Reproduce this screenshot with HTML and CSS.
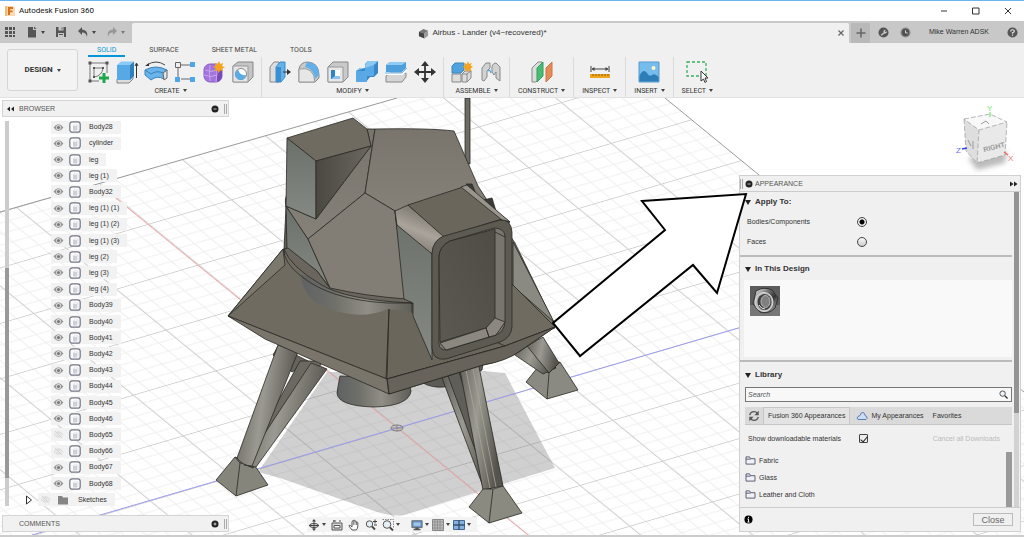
FILE: index.html
```html
<!DOCTYPE html>
<html lang="en">
<head>
<meta charset="utf-8">
<title>Autodesk Fusion 360</title>
<link rel="stylesheet" href="styles.css">
</head>
<body>
<svg class="defs" aria-hidden="true">
  <symbol id="eye" viewBox="0 0 12 10"><path d="M.5 5Q6-2.500 11.500 5Q6 12.500 .5 5Z" fill="#969696"/><circle cx="6" cy="5" r="2.800" fill="#dcdcdc"/><circle cx="6" cy="5" r="1.700" fill="#777"/></symbol>
  <symbol id="eye-off" viewBox="0 0 12 10"><path d="M1 5Q6-1 11 5Q6 11 1 5ZM2 1l8 8" fill="none" stroke="#d2d2d2"/><circle cx="6" cy="5" r="1.800" fill="none" stroke="#d2d2d2"/></symbol>
  <symbol id="body" viewBox="0 0 12 12"><rect x=".8" y=".8" width="10.400" height="10.400" rx="2.500" fill="#fafafa" stroke="#747785" stroke-width="1.200"/><path d="M4 5h4v4.500H4z" fill="#cfcfda"/><path d="M4 5l1-1h4v4.500l-1 1" fill="none" stroke="#e2e2ea"/></symbol>
  <symbol id="folder" viewBox="0 0 12 10"><path d="M1 9V1h4l1 2h5v6z" fill="#eef1f8" stroke="#4d5468"/><path d="M1 3.500h5" stroke="#4d5468" fill="none"/></symbol>
</svg>

<header class="titlebar">
  <svg class="logo" viewBox="0 0 10 10"><path d="M0 0h8l2 2v8H0z" fill="#fbd9b5"/><path d="M0 0h2v10H0z" fill="#f6b97d"/><path d="M3 9V1h5v2H5v1.500h2.500v1.800H5V9z" fill="#d96f12"/></svg>
  <h1>Autodesk Fusion 360</h1>
  <div class="window-buttons">
    <button aria-label="Minimize"><svg viewBox="0 0 10 10"><path d="M2 5h6" stroke="#333"/></svg></button>
    <button aria-label="Maximize"><svg viewBox="0 0 10 10"><path d="M1.500 2h6.500v6H1.500z" fill="none" stroke="#333"/></svg></button>
    <button aria-label="Close window"><svg viewBox="0 0 10 10"><path d="M2 2l6 6M8 2l-6 6" stroke="#333"/></svg></button>
  </div>
</header>

<div class="tabstrip">
  <div class="quick">
    <button aria-label="Data panel"><svg viewBox="0 0 12 12"><path d="M1 1h3v3H1zM5 1h3v3H5zM9 1h2v3H9zM1 5h3v3H1zM5 5h3v3H5zM9 5h2v3H9zM1 9h3v2H1zM5 9h3v2H5zM9 9h2v2H9z" fill="#555"/></svg></button>
    <button class="menu" aria-label="File"><svg viewBox="0 0 12 12"><path d="M2 1h5v3h3v7.500H2z" fill="#555"/><path d="M8 .5L10.500 3H8z" fill="#555"/></svg><i class="caret"></i></button>
    <button aria-label="Save"><svg viewBox="0 0 12 12"><path d="M1 1h10v10H1z" fill="#555"/><path d="M3.500 1h5v3.500h-5zM3 7h6v4H3z" fill="#c8c8c8"/><path d="M6.500 1.500h1v2h-1zM4 8h4v1H4z" fill="#555"/></svg></button>
    <button class="menu" aria-label="Undo"><svg viewBox="0 0 12 12"><path d="M5 1L1 5l4 4V6.500q4-.5 5 4.500Q11.500 4 5 3.500z" fill="#555"/></svg><i class="caret"></i></button>
    <button class="menu faded" aria-label="Redo"><svg viewBox="0 0 12 12"><path d="M7 1l4 4-4 4V6.500q-4-.5-5 4.500Q.5 4 7 3.500z" fill="#777"/></svg><i class="caret"></i></button>
  </div>
  <div class="doc-tab">
    <div class="doc-title">
      <svg class="doc-icon" viewBox="0 0 12 12"><path d="M1 4l5-3 5 2-4 3z" fill="#777"/><path d="M1 4l6 2v5.500L1 9z" fill="#444"/><path d="M7 6l4-3v5.500l-4 3z" fill="#999"/></svg>
      <span>Airbus - Lander (v4~recovered)*</span>
    </div>
    <button class="doc-close" aria-label="Close tab"><svg viewBox="0 0 8 8"><path d="M1.500 1.500l5 5M6.500 1.500l-5 5" stroke="#666" stroke-width="1.200"/></svg></button>
  </div>
  <button class="new-tab" aria-label="New tab"><svg viewBox="0 0 10 10"><path d="M5 .5v9M.5 5h9" stroke="#666" stroke-width="1.500"/></svg></button>
  <div class="account">
    <button aria-label="Extensions"><svg viewBox="0 0 12 12"><circle cx="6" cy="6" r="5.500" fill="#555"/><path d="M3 8.500L6 6q-.5-3 2.500-3L7.500 4.500l1 1L10 4.500Q9.500 8 7 7L4 9.500z" fill="#ccc"/></svg></button>
    <button aria-label="Job status"><svg viewBox="0 0 12 12"><circle cx="6" cy="6" r="5.500" fill="#8a8a8a"/><circle cx="6" cy="6" r="4" fill="#505050"/><path d="M6 3.500V6.500h2.500" stroke="#ddd" fill="none"/></svg></button>
    <button class="user">Mike Warren ADSK</button>
    <button aria-label="Help"><svg viewBox="0 0 12 12"><circle cx="6" cy="6" r="5.500" fill="#555"/><path d="M4 4.800Q4 3 6 3t2 1.600Q8 5.500 6 6.300V7.300M6 8.200v1.300" fill="none" stroke="#e5e5e5" stroke-width="1.300"/></svg></button>
  </div>
</div>

<div class="ribbon">
  <button class="design">DESIGN <i class="caret"></i></button>
  <div class="ribbon-main">
    <nav class="ribbon-tabs">
      <a href="#solid" class="active">SOLID</a><a href="#surface">SURFACE</a><a href="#sheet">SHEET METAL</a><a href="#tools">TOOLS</a>
    </nav>
    <div class="groups">
      <section class="group">
        <div class="icons">
          <button aria-label="Create sketch"><svg viewBox="0 0 24 24"><path d="M4 3h17M4 3v18M4 21h9M21 3v10" stroke="#777" fill="none"/><path d="M8 8v9q8-1 9-9z" fill="none" stroke="#777"/><path d="M2.500 1.500h3v3h-3zM19.500 1.500h3v3h-3zM2.500 19.500h3v3h-3zM7 7h2v2H7zM16 7h2v2h-2zM7 16h2v2H7z" fill="#555"/><path d="M18 13v10M13 18h10" stroke="#1fa84b" stroke-width="3"/></svg></button>
          <button aria-label="Extrude"><svg viewBox="0 0 24 24"><path d="M2 19L6 15h12v4l-4 4H2z" fill="#ddd" stroke="#888"/><path d="M2 5l4-3.500h13L15 5z" fill="#8ccaf5"/><path d="M2 5h13v15H2z" fill="#57a9e6"/><path d="M15 5l4-3.500v14.500l-4 4z" fill="#2e7fbe"/><path d="M21.500 18V4M20 6l1.500-3L23 6" stroke="#333" fill="none"/></svg></button>
          <button aria-label="Revolve"><svg viewBox="0 0 24 24"><path d="M3 5Q12-1 21 5" stroke="#444" fill="none"/><path d="M1 6l4-3v3z" fill="#333"/><path d="M1 10q11-6 22 0l-3 9q-7-4-13 1L1 15z" fill="#68b4eb" stroke="#3882b9"/><path d="M1 10l6 4q6-4 12-1l4-3" stroke="#3882b9" fill="none"/><path d="M19 13l4-3v8l-3 2z" fill="#e5e5e5" stroke="#666"/></svg></button>
          <button aria-label="Pattern"><svg viewBox="0 0 24 24"><path d="M5 8v10M8 5h9M8 19h9" stroke="#666"/><path d="M2.500 2.500h5v5h-5z" fill="#eee" stroke="#666"/><path d="M17 2h5v5h-5zM2 17h5v5H2zM17 17h5v5h-5z" fill="#4da6e8"/></svg></button>
          <button aria-label="Create form"><svg viewBox="0 0 24 24"><rect x="2" y="4" width="18" height="18" rx="6" fill="#a374db" stroke="#8a5cc6"/><path d="M15 9q5-2 5 2v5q0 4-5 6z" fill="#7949b8"/><path d="M3 10q6 3 12 0M2 15q7 3 13 0M8 5q-1 8 0 16M14 5q2 8 0 17" stroke="#c9a5ef" fill="none"/><path d="M17 1l1.200 3 3-1-1.200 3 3 1.200-3 1.300 1 3-3-1.200-1.300 3-1.200-3-3 1 1.200-3-3-1.200 3-1.200-1-3 3 1z" fill="#f5a21c"/></svg></button>
          <button aria-label="Hole"><svg viewBox="0 0 24 24"><path d="M2 6l5-4h15v15l-5 5H2z" fill="#c5c5c5" stroke="#888"/><path d="M2 6h15v16H2z" fill="#e5e5e5" stroke="#999"/><circle cx="10" cy="14" r="5.500" fill="#fff" stroke="#888"/><path d="M7 9.500A5.500 5.500 0 1 0 15 15Q9 16 7 9.500z" fill="#5aaae5"/></svg></button>
        </div><button class="group-label">CREATE <i class="caret"></i></button>
      </section>
      <section class="group">
        <div class="icons">
          <button aria-label="Press pull"><svg viewBox="0 0 24 24"><path d="M2 7l4-5h5v20H2z" fill="#ddd" stroke="#888"/><path d="M8 7l4-5h5v15l-4 5H8z" fill="#66b1ea" stroke="#3d88c2"/><path d="M8 7h5v15H8z" fill="#388fd2"/><path d="M15 12h7" stroke="#333"/><path d="M19 9l4 3-4 3z" fill="#333"/></svg></button>
          <button aria-label="Fillet"><svg viewBox="0 0 24 24"><path d="M2 22V9Q3 2 11 2q11 1 11 13v3l-4 4z" fill="#c9c9c9" stroke="#888"/><path d="M2 22V9q15-3 16 13z" fill="#e6e6e6" stroke="#999"/><path d="M10 2q12 1 12 13l-4 4Q17 9 8 7z" fill="#62afea"/></svg></button>
          <button aria-label="Shell"><svg viewBox="0 0 24 24"><path d="M2 7l5-5h15v15l-5 5H2z" fill="#c9c9c9" stroke="#888"/><path d="M2 7h15v15H2z" fill="#e7e7e7" stroke="#999"/><path d="M5 10h9v9H5z" fill="#8bc5ef"/><path d="M9 10h5v6H9z" fill="#fff"/><path d="M5 10v9l4-3v-6z" fill="#2f84c5"/></svg></button>
          <button aria-label="Combine"><svg viewBox="0 0 24 24"><path d="M1 11l4-3h5V4l3-3h10v12l-4 4h-4l-4 5H1z" fill="#3788c8"/><path d="M1 11h9V5h9v11h-7v6H1z" fill="#58a9e5"/><path d="M1 11l4-3h6L10 5l3-4h10l-4 4" fill="#8bc8f2"/></svg></button>
          <button aria-label="Split body"><svg viewBox="0 0 24 24"><path d="M2 5l4-3h16v6l-4 4H2z" fill="#4e9fdb"/><path d="M2 5l4-3h16l-4 3z" fill="#90cbf3"/><path d="M2 16l4-3h16v4l-4 5H2z" fill="#d5d5d5" stroke="#888"/><path d="M1 14h17l5-4" stroke="#fff" stroke-width="2" fill="none"/><path d="M1 13h17l5-5" stroke="#69b5ee" fill="none"/></svg></button>
          <button aria-label="Move"><svg viewBox="0 0 24 24"><path d="M12 4v16M4 12h16" stroke="#333" stroke-width="1.800"/><path d="M12 1l4 5H8zM12 23l-4-5h8zM1 12l5-4v8zM23 12l-5 4V8z" fill="#333"/></svg></button>
        </div><button class="group-label">MODIFY <i class="caret"></i></button>
      </section>
      <section class="group">
        <div class="icons">
          <button aria-label="New component"><svg viewBox="0 0 24 24"><path d="M2 14h9v8H2zM12 14l3-3h6v7l-4 4h-5z" fill="#ddd" stroke="#888"/><path d="M2 6l3-3h9v7l-3 3H2z" fill="#50a2de" stroke="#3b86be"/><path d="M12 14h5v8M17 14l4-3" fill="none" stroke="#888"/><path d="M18 1l1 3 2.800-1.200L20.600 5.500 23 7l-2.400 1.200 1.200 2.700L19 10l-1 3-1.200-3-2.700 1 1.100-2.800L12.500 7l2.700-1.500L14 2.800 16.800 4z" fill="#f5a21c"/></svg></button>
          <button aria-label="Joint"><svg viewBox="0 0 24 24"><path d="M3 20V8l4-5h4v5L8 11v6l-3 4z" fill="#d2d2d2" stroke="#888"/><path d="M13 12q-1-9 4-9l4 4v14l-4-3V12l-2 3z" fill="#d2d2d2" stroke="#888"/><path d="M9 11q2-2 3 2" stroke="#57a9e6" fill="none" stroke-width="1.500"/></svg></button>
        </div><button class="group-label">ASSEMBLE <i class="caret"></i></button>
      </section>
      <section class="group single">
        <div class="icons"><button aria-label="Offset plane"><svg viewBox="0 0 24 24"><path d="M2 8l6-6h4v14l-6 6H2z" fill="#ddd" stroke="#888"/><path d="M7 8l6-6v14l-6 6z" fill="#45bd73" stroke="#379c5d"/><path d="M16 8l6-6v14l-6 6z" fill="#e48b57" stroke="#cb7444"/></svg></button></div><button class="group-label">CONSTRUCT <i class="caret"></i></button>
      </section>
      <section class="group single">
        <div class="icons"><button aria-label="Measure"><svg viewBox="0 0 24 24"><path d="M3 6v6M21 6v6M4 9h16" stroke="#444"/><path d="M3.500 9l3-2v4zM20.500 9l-3-2v4z" fill="#444"/><path d="M2 14h20v4H2z" fill="#f1a51d"/><path d="M5 14v2M8 14v2M11 14v2M14 14v2M17 14v2M20 14v2" stroke="#8a5c0c"/></svg></button></div><button class="group-label">INSPECT <i class="caret"></i></button>
      </section>
      <section class="group single">
        <div class="icons"><button aria-label="Insert image"><svg viewBox="0 0 24 24"><path d="M2 2h20v20H2z" fill="#76bcec" stroke="#5499ca"/><circle cx="16.500" cy="8" r="2" fill="#fff6c2"/><path d="M2.500 16Q6 8 10 13q2 4 5 2t6.500 2v4.500h-19z" fill="#2d7db9"/></svg></button></div><button class="group-label">INSERT <i class="caret"></i></button>
      </section>
      <section class="group single">
        <div class="icons"><button aria-label="Select"><svg viewBox="0 0 24 24"><path d="M2 2h19v14H2z" fill="none" stroke="#38b25f" stroke-width="1.300" stroke-dasharray="3 2"/><path d="M16 11v10l2.500-2 1.500 3.500 1.500-1L20 18h3z" fill="#fff" stroke="#333"/></svg></button></div><button class="group-label">SELECT <i class="caret"></i></button>
      </section>
    </div>
  </div>
</div>

<main class="workspace">
  <svg class="scene" viewBox="0 98 1024 437" preserveAspectRatio="xMidYMid slice" role="img" aria-label="Lander model">
    <defs>
      <pattern id="grid" width="10" height="10" patternUnits="userSpaceOnUse" patternTransform="matrix(4.98 4.08 8.25 -2.43 397 428)">
        <path d="M0 2H10M0 4H10M0 6H10M0 8H10" stroke="#efefef" stroke-width=".14"/>
        <path d="M2 0V10M4 0V10M6 0V10M8 0V10" stroke="#efefef" stroke-width=".18"/>
        <path d="M0 0H10" stroke="#cfcfcf" stroke-width=".28"/><path d="M0 0V10" stroke="#cfcfcf" stroke-width=".32"/>
      </pattern>
      <linearGradient id="leg" x1="0" x2="1" y1="0" y2=".25"><stop offset="0" stop-color="#5d5b55"/><stop offset=".5" stop-color="#9b9a92"/><stop offset="1" stop-color="#55534d"/></linearGradient>
      <linearGradient id="noz" x1="0" x2="1"><stop offset="0" stop-color="#5f6163"/><stop offset=".3" stop-color="#6f7069"/><stop offset=".6" stop-color="#918e86"/><stop offset="1" stop-color="#5f5d57"/></linearGradient>
      <linearGradient id="side" x1="0" x2="0" y1="0" y2="1"><stop offset="0" stop-color="#6c706b"/><stop offset="1" stop-color="#848983"/></linearGradient>
      <linearGradient id="shade" x1="0" x2="1"><stop offset="0" stop-color="#4b4841"/><stop offset="1" stop-color="#6c6860"/></linearGradient>
      <linearGradient id="pane" x1="0" x2="0" y1="0" y2="1"><stop offset="0" stop-color="#79756c"/><stop offset="1" stop-color="#858179"/></linearGradient>
      <linearGradient id="strip" x1=".2" y1="1" x2=".6" y2="0"><stop offset="0" stop-color="#706d66"/><stop offset=".5" stop-color="#aaa49b"/><stop offset="1" stop-color="#706c64"/></linearGradient>
      <linearGradient id="recess" x1="0" x2="1" y1="1" y2="0"><stop offset="0" stop-color="#5c5953"/><stop offset="1" stop-color="#4f4c46"/></linearGradient>
    </defs>
    <path d="M0 98h1024v437H0z" fill="#fff"/>
    <path d="M0 212L397 98h268L1024 392V535H0z" fill="url(#grid)"/>
    <path d="M0 212L397 98M665 98L1024 392" fill="none" stroke="#999"/>
    <path d="M327 372L484 371 505 373 555 468 407 514Q397 518 377 512L280 478 258 472z" fill="#777" fill-opacity=".35"/>
    <path d="M112 195L528 535" stroke="#f3a6a6"/>
    <path d="M32 535L742 327" stroke="#9c9cf0"/>
    <ellipse cx="397" cy="428" rx="6" ry="3" fill="none" stroke="#777"/><path d="M391 428h12M397 425v6" stroke="#888"/>
    <g stroke="#292823" stroke-width=".8" stroke-linejoin="round">
      <path d="M465 98h5v66h-5z" fill="#6d6b64"/>
      <path d="M273 355L278 346 310 362 292 372z" fill="#65635d"/>
      <path d="M538 367L526 382 547 399 578 390 560 362z" fill="#8b8a82"/><path d="M549 373L547 399M538 367l11 6 11-11" fill="none"/>
      <path d="M512 353L528 345 556 368 543 374z" fill="url(#leg)"/><path d="M527 346L543 337 559 363 549 373z" fill="url(#leg)"/>
      <path d="M340 376Q338 386 337 393Q338 406 374 407Q409 406 411 391L409 383 387 378z" fill="url(#noz)"/>
      <path d="M423 383Q432 388 444 387L465 380 482 370 483 364z" fill="#5c5a55"/>
      <path d="M216 480L235 457 253 463 268 485 236 496z" fill="#85857b"/><path d="M235 457L240 463 236 496M240 463l13 2" fill="none"/>
      <path d="M300 361L323 361 253 468 244 464z" fill="#6b6961"/>
      <path d="M311 363L327 369 256 467 244 465z" fill="url(#leg)"/>
      <path d="M278 345L298 352 252 466Q243 466 237 458z" fill="url(#leg)"/>
      <path d="M442 378L458 372 492 488 484 489z" fill="url(#leg)"/>
      <path d="M448 376L459 372 492 480 487 482z" fill="#605e58"/>
      <path d="M458 360L477 357 503 486 483 490z" fill="url(#leg)"/>
      <path d="M464 360L490 488M471 359L496 487" stroke="#aaa795" fill="none"/>
      <path d="M483 489L469 507 489 523 522 513 503 486 493 489z" fill="#8a8a80"/><path d="M493 489L489 523" fill="none"/>
      <path d="M492 209L515 243 553 321 555 328 500 345 480 190z" fill="#77736a"/>
      <path d="M513 242L554 322 513 286z" fill="#8b8a82"/>
      <path d="M283 249L228 316 387 379 505 346 555 327 513 285 420 270z" fill="#706b61"/>
      <path d="M283 249L228 316 285 265z" fill="#7c786e"/>
      <path d="M389 309L387 379 505 346 412 303z" fill="#6b665c"/>
      <path d="M228 316L387 379 505 346 555 327 519 352Q500 362 483 365L389 394 265 339z" fill="#7a756b"/>
      <path d="M387 379L389 394 483 365Q507 361 520 351L555 327 505 346z" fill="#67635b"/>
      <path d="M386 379L389 309M382 307q7 3 13 0M389 394L387 379" fill="none"/>
      <path d="M301 274Q302 298 327 308Q360 321 388 309L412 312V303L330 286z" fill="url(#noz)" stroke="none"/>
      <path d="M412 303V313" fill="none"/>
      <path d="M286 207Q284 197 288 194V248L284 249z" fill="#5f5c55"/>
      <path d="M286 206L308 239 330 288 317 271 287 249z" fill="url(#side)"/>
      <path d="M284 249Q290 266 320 284Q345 300 412 303L405 297 329 287 317 271 288 248z" fill="#6a665e"/>
      <path d="M284 249Q283 262 301 276Q330 300 388 303L412 303" fill="none"/>
      <path d="M367 129L375 129 365 193 308 239 286 206 316 219 371 146z" fill="url(#pane)"/>
      <path d="M375 129Q430 128 454 131L478 186 492 208 395 211 365 193z" fill="url(#pane)"/>
      <path d="M365 193L395 211 406 299Q365 296 330 288L308 239z" fill="#827e75"/>
      <path d="M287 138L353 118 367 129 371 146 316 161z" fill="#6f6b60"/>
      <path d="M287 138L316 161V219L286 206z" fill="url(#side)"/>
      <path d="M316 161L371 146 316 219z" fill="url(#shade)"/>
      <path d="M466 184L472 184 476 194 483 200 492 198 496 211 510 222 503 224z" fill="#3c3a35"/>
      <path d="M395 211L397 225 432 252V360L413 316V303L404 299z" fill="url(#side)"/>
      <path d="M395 211L408 205 444 236Q433 241 432 254L397 225z" fill="url(#strip)"/>
      <path d="M408 205L463 187 502 219 444 237z" fill="#6a665c"/>
      <path d="M461 187L467 185 510 222 502 220z" fill="#99958d"/>
      <path d="M432 253Q433 240 444 236L500 220Q511 219 512 232V327Q511 338 500 342L446 359Q433 361 432 348z" fill="#5d5a52"/>
      <path d="M439 256Q440 246 450 241L494 228Q504 228 505 236V322Q504 332 496 335L447 350Q439 350 439 344z" fill="#77756d"/>
      <path d="M439 256Q440 246 450 241L495 229V318Q495 325 486 328L440 342z" fill="url(#recess)"/>
      <path d="M440 343L486 328 489 337 446 350zM486 328L495 318 505 322 496 335 489 337zM495 232l10 5" fill="#8c8880"/>
    </g>
  </svg>

  <aside class="left-dock">
    <div class="dock-bar"><button aria-label="Collapse browser"><svg class="mini" viewBox="0 0 8 8"><path d="M4 1.500v5L1 4zM8 1.500v5L5 4z" fill="#222"/></svg></button><span>BROWSER</span><button class="dot" aria-label="Hide browser"><svg class="mini" viewBox="0 0 8 8"><circle cx="4" cy="4" r="3.500" fill="#222"/><path d="M2.500 4h3" stroke="#bbb"/></svg></button><i class="grip"></i></div>
    <div class="tree-wrap">
      <div class="tree-scroll"><i></i></div>
      <ul class="tree">
        <li><span class="row"><svg class="eye"><use href="#eye"/></svg><svg class="body"><use href="#body"/></svg><span>Body28</span></span></li>
        <li><span class="row"><svg class="eye"><use href="#eye"/></svg><svg class="body"><use href="#body"/></svg><span>cylinder</span></span></li>
        <li><span class="row"><svg class="eye"><use href="#eye"/></svg><svg class="body"><use href="#body"/></svg><span>leg</span></span></li>
        <li><span class="row"><svg class="eye"><use href="#eye"/></svg><svg class="body"><use href="#body"/></svg><span>leg (1)</span></span></li>
        <li><span class="row"><svg class="eye"><use href="#eye"/></svg><svg class="body"><use href="#body"/></svg><span>Body32</span></span></li>
        <li><span class="row"><svg class="eye"><use href="#eye"/></svg><svg class="body"><use href="#body"/></svg><span>leg (1) (1)</span></span></li>
        <li><span class="row"><svg class="eye"><use href="#eye"/></svg><svg class="body"><use href="#body"/></svg><span>leg (1) (2)</span></span></li>
        <li><span class="row"><svg class="eye"><use href="#eye"/></svg><svg class="body"><use href="#body"/></svg><span>leg (1) (3)</span></span></li>
        <li><span class="row"><svg class="eye"><use href="#eye"/></svg><svg class="body"><use href="#body"/></svg><span>leg (2)</span></span></li>
        <li><span class="row"><svg class="eye"><use href="#eye"/></svg><svg class="body"><use href="#body"/></svg><span>leg (3)</span></span></li>
        <li><span class="row"><svg class="eye"><use href="#eye"/></svg><svg class="body"><use href="#body"/></svg><span>leg (4)</span></span></li>
        <li><span class="row"><svg class="eye"><use href="#eye"/></svg><svg class="body"><use href="#body"/></svg><span>Body39</span></span></li>
        <li><span class="row"><svg class="eye"><use href="#eye"/></svg><svg class="body"><use href="#body"/></svg><span>Body40</span></span></li>
        <li><span class="row"><svg class="eye"><use href="#eye"/></svg><svg class="body"><use href="#body"/></svg><span>Body41</span></span></li>
        <li><span class="row"><svg class="eye"><use href="#eye"/></svg><svg class="body"><use href="#body"/></svg><span>Body42</span></span></li>
        <li><span class="row"><svg class="eye"><use href="#eye"/></svg><svg class="body"><use href="#body"/></svg><span>Body43</span></span></li>
        <li><span class="row"><svg class="eye"><use href="#eye"/></svg><svg class="body"><use href="#body"/></svg><span>Body44</span></span></li>
        <li><span class="row"><svg class="eye"><use href="#eye"/></svg><svg class="body"><use href="#body"/></svg><span>Body45</span></span></li>
        <li><span class="row"><svg class="eye"><use href="#eye"/></svg><svg class="body"><use href="#body"/></svg><span>Body46</span></span></li>
        <li><span class="row"><svg class="eye"><use href="#eye-off"/></svg><svg class="body"><use href="#body"/></svg><span>Body65</span></span></li>
        <li><span class="row"><svg class="eye"><use href="#eye-off"/></svg><svg class="body"><use href="#body"/></svg><span>Body66</span></span></li>
        <li><span class="row"><svg class="eye"><use href="#eye"/></svg><svg class="body"><use href="#body"/></svg><span>Body67</span></span></li>
        <li><span class="row"><svg class="eye"><use href="#eye"/></svg><svg class="body"><use href="#body"/></svg><span>Body68</span></span></li>
        <li class="branch"><svg class="expand" viewBox="0 0 8 10"><path d="M1.500 1l5 4-5 4z" fill="#fff" stroke="#333"/></svg><span class="row"><svg class="eye"><use href="#eye-off"/></svg><svg class="body" viewBox="0 0 12 12"><path d="M1 10.500V2h4l1 1.500h5v7z" fill="#858585"/></svg><span>Sketches</span></span></li>
      </ul>
    </div>
    <div class="dock-bar comments"><span>COMMENTS</span><button class="dot" aria-label="Add comment"><svg class="mini" viewBox="0 0 8 8"><circle cx="4" cy="4" r="3.500" fill="#222"/><path d="M2.500 4h3M4 2.500v3" stroke="#ccc"/></svg></button><i class="grip"></i></div>
  </aside>

  <div class="nav-area">
    <div class="navbar">
      <button class="menu" aria-label="Orbit"><svg viewBox="0 0 12 12"><path d="M6 1v10M1 6.500h10" stroke="#444"/><ellipse cx="6" cy="6.500" rx="4.500" ry="2" fill="none" stroke="#444"/><path d="M6 0l2 2.500H4zM6 12L4 9.500h4z" fill="#444"/></svg><i class="caret"></i></button>
      <button aria-label="Look at"><svg viewBox="0 0 12 12"><path d="M1 4h10v7H1z" fill="#ddd" stroke="#555"/><path d="M3 6.500h6v2.500H3z" fill="#fff" stroke="#555"/><path d="M2 2h3M8 2h2M3 1v2" stroke="#555"/></svg></button>
      <button aria-label="Pan"><svg viewBox="0 0 12 12"><path d="M4 11L1 7q0-1.500 1.500-.5L4 8V2.500q.7-1 1.300 0V1.500q.8-1 1.500 0v1q.8-1 1.500 0v1q1-.8 1.500 0V7q0 2.500-1.500 4z" fill="#fff" stroke="#444" stroke-width=".9"/><path d="M5.400 2.500v3.500M7 2.500v3.500M8.500 3v3" stroke="#555" stroke-width=".7"/></svg></button>
      <button aria-label="Zoom"><svg viewBox="0 0 12 12"><circle cx="4.500" cy="5" r="3.200" fill="#e4f0f6" stroke="#555"/><path d="M7 7.500l3 3" stroke="#444" stroke-width="1.800"/><path d="M8 2.500h4M10 .5v4M9 6h3" stroke="#444"/></svg></button>
      <button class="menu wide" aria-label="Zoom window"><svg viewBox="0 0 12 12"><path d="M.5.5h11v9" fill="none" stroke="#888" stroke-dasharray="1.500 1"/><circle cx="5" cy="5.500" r="3.800" fill="#e4f0f6" stroke="#555"/><path d="M8 8.500l3 3" stroke="#444" stroke-width="1.800"/></svg><i class="caret"></i></button>
      <button class="menu" aria-label="Display settings"><svg viewBox="0 0 14 12"><path d="M1 1h12v8H1z" fill="#6793c0" stroke="#60656c"/><path d="M3 3h8v4H3z" fill="#9fc7ea"/><path d="M5 9h4v1.500h2V12H3v-1.500h2z" fill="#555"/></svg><i class="caret"></i></button>
      <button class="menu" aria-label="Grid settings"><svg viewBox="0 0 12 12"><path d="M.5.5h11v11H.5z" fill="#bbb" stroke="#888"/><path d="M3 1v10M5.500 1v10M8 1v10M1 3h10M1 6h10M1 9h10" stroke="#8c8c8c" stroke-width=".8"/></svg><i class="caret"></i></button>
      <button class="menu" aria-label="Viewports"><svg viewBox="0 0 12 12"><path d="M.5 1.500h11v9H.5z" fill="#86b0de" stroke="#456b96"/><path d="M6 1v10M0 6h12" stroke="#345274" stroke-width="1.300"/></svg><i class="caret"></i></button>
    </div>
  </div>

  <div class="right-dock">
    <svg class="cube" viewBox="0 0 84 77" aria-label="View cube">
      <defs><filter id="soft" x="-20%" y="-50%" width="140%" height="200%"><feGaussianBlur stdDeviation="2.500"/></filter></defs>
      <path d="M28 60l9 12 28-7 2-12z" fill="#bbb" filter="url(#soft)"/>
      <path d="M24 21L50 16 67 24 39 32z" fill="#f8f8f8"/><path d="M24 21l15 11-2 33L26 53z" fill="#dedede"/><path d="M39 32L67 24 65 57 37 65z" fill="#e9e9e9"/>
      <path d="M24 21L50 16 67 24 39 32zM24 21l2 32 11 12 2-33M37 65l28-8 2-33" fill="none" stroke="#999" stroke-width=".7" stroke-dasharray="5 2"/>
      <path d="M41 26l5-3 3 3M28 42l3 6M33 43v8" stroke="#999" fill="none"/>
      <path d="M50 14v5" stroke="#5fe05f"/><path d="M22 51l5-1" stroke="#3344dd" stroke-width="1.500"/><path d="M64 54l4 3" stroke="#e66" stroke-width="1.500"/>
      <text x="44" y="54" class="cube-face" transform="rotate(-14 44 54)">RIGHT</text>
      <text x="47" y="13" class="cube-axis" fill="#6be66b">Y</text><text x="16" y="55" class="cube-axis" fill="#6570ee">Z</text><text x="68" y="63" class="cube-axis" fill="#f07878">X</text>
    </svg>
    <section class="panel">
      <header class="panel-head"><i class="grip"></i><button aria-label="Minimize panel"><svg class="mini" viewBox="0 0 8 8"><circle cx="4" cy="4" r="3.500" fill="#222"/><path d="M2.500 4h3" stroke="#bbb"/></svg></button><h2>APPEARANCE</h2><button class="push" aria-label="Collapse panel"><svg class="mini" viewBox="0 0 8 8"><path d="M0 1.500v5L3.500 4zM4 1.500v5L7.500 4z" fill="#222"/></svg></button></header>
      <div class="panel-body">
        <form class="panel-content">
          <h3 class="first"><i class="caret big"></i>Apply To:</h3>
          <label class="field" for="bodies"><span>Bodies/Components</span><input id="bodies" type="radio" name="apply" checked></label>
          <label class="field" for="faces"><span>Faces</span><input id="faces" type="radio" name="apply"></label>
          <hr>
          <h3><i class="caret big"></i>In This Design</h3>
          <div class="materials"><svg class="swatch" viewBox="0 0 30 30"><defs><linearGradient id="metal" x1="0" x2="1" y1="0" y2="1"><stop offset="0" stop-color="#fff"/><stop offset=".35" stop-color="#777"/><stop offset=".6" stop-color="#333"/><stop offset="1" stop-color="#ccc"/></linearGradient></defs><path d="M0 0h30v30H0z" fill="#5d5d5d"/><path d="M0 19h30v11H0z" fill="#777"/><path d="M6 5Q14 0 22 4L28 12 25 22Q18 29 10 26L3 18z" fill="url(#metal)" stroke="#333"/><ellipse cx="14" cy="16" rx="9" ry="9.500" fill="#bbb" stroke="#ddd"/><ellipse cx="14.500" cy="16" rx="7" ry="8" fill="#3f3f3f"/><ellipse cx="15.500" cy="15.500" rx="4.500" ry="6" fill="#808080" stroke="#bbb"/><path d="M9 19q2 4 6 4" fill="none" stroke="#eee"/></svg></div>
          <hr>
          <h3 class="library"><i class="caret big"></i>Library</h3>
          <label class="search"><input type="text" placeholder="Search" aria-label="Search"><svg viewBox="0 0 10 10"><circle cx="4" cy="4" r="3" fill="#eef5fa" stroke="#444"/><path d="M6.500 6.500L9.500 9.500" stroke="#333" stroke-width="1.500"/></svg></label>
          <div class="lib-tabs">
            <button type="button" aria-label="Refresh" class="refresh"><svg viewBox="0 0 14 14"><path d="M2 6q1-4 5-4 2.500 0 4 2M12 8q-1 4-5 4-2.500 0-4-2" fill="none" stroke="#555" stroke-width="1.500"/><path d="M12.500 1v5h-5zM1.500 13V8h5z" fill="#555"/></svg></button>
            <button type="button" class="on">Fusion 360 Appearances</button>
            <button type="button" class="mine"><svg viewBox="0 0 12 10"><path d="M2 8.500Q0 7 2 5.500 3 5 4 4.500 5 1 7 1.500 9 2 9 4.500q2.500.5 2 3l-1 1z" fill="#cddcf5" stroke="#5b7db5"/></svg>My Appearances</button>
            <button type="button">Favorites</button>
          </div>
          <div class="downloads"><label for="show">Show downloadable materials</label><input id="show" type="checkbox" checked><button type="button" disabled>Cancel all Downloads</button></div>
          <div class="lib-list">
            <ul><li><svg><use href="#folder"/></svg>Fabric</li><li><svg><use href="#folder"/></svg>Glass</li><li><svg><use href="#folder"/></svg>Leather and Cloth</li><li><svg><use href="#folder"/></svg></li></ul>
            <i class="list-scroll"></i>
          </div>
        </form>
        <div class="panel-scroll"><i></i></div>
      </div>
      <footer class="panel-foot"><svg viewBox="0 0 10 10"><circle cx="5" cy="5" r="4.500" fill="#000"/><path d="M5 2v1.300M5 4.200v3.800M3.800 4.500H5M3.700 7.800h2.600" stroke="#fff"/></svg><button>Close</button></footer>
    </section>
  </div>
  <svg class="scene pointer" viewBox="0 98 1024 437" preserveAspectRatio="xMidYMid slice" aria-hidden="true"><path d="M642 201L746 194 717 293 693 265 580 356 553 323 665 230z" fill="#fff" stroke="#000" stroke-width="2"/></svg>
</main>
<div class="statusline"></div>
</body>
</html>
```

FILE: styles.css
```css
* { box-sizing: border-box; }
body { margin: 0; height: 100vh; display: flex; flex-direction: column; overflow: hidden; background: #fff; color: #333; font: 7px/10px "Liberation Sans", Arial, sans-serif; }
button { border: 0; padding: 0; margin: 0; background: none; color: inherit; font: inherit; display: flex; align-items: center; justify-content: center; white-space: nowrap; }
svg { display: block; flex: none; }
h1, h2, h3, ul { margin: 0; padding: 0; font: inherit; list-style: none; }
.defs { position: absolute; width: 0; height: 0; }
.caret { display: inline-block; flex: none; width: 0; height: 0; border: solid transparent; border-width: 3px 2px 0; border-top-color: #444; }
.caret.big { border-width: 5px 3px 0; border-top-color: #222; }
.mini { width: 8px; height: 8px; }

.titlebar { display: flex; align-items: center; height: 21px; padding: 0 11px 0 5px; gap: 4px; border-top: 1px solid #6cb4ee; color: #111; font: 8px/10px Roboto, sans-serif; }
.logo { width: 10px; height: 10px; }
.window-buttons { display: flex; gap: 22px; margin-left: auto; }
.window-buttons svg { width: 10px; height: 10px; }

.tabstrip { display: flex; height: 22px; background: #c8c8c8; }
.quick { display: flex; align-items: center; gap: 10px; width: 132px; padding-left: 4px; }
.quick svg { width: 12px; height: 12px; }
.menu { gap: 3px; }
.faded { opacity: .6; }
.doc-tab { flex: 1; display: flex; align-items: center; margin-top: 2px; background: #f0f0f0; font-size: 8px; border-radius: 2px 2px 0 0; }
.doc-title { flex: 1; display: flex; align-items: center; justify-content: center; gap: 3px; }
.doc-icon { width: 11px; height: 11px; }
.doc-close { width: 16px; }
.doc-close svg { width: 8px; height: 8px; }
.new-tab { width: 19px; margin: 2px 0 0 2px; background: #b9b9b9; }
.new-tab svg { width: 10px; height: 10px; }
.account { display: flex; align-items: center; width: 154px; padding: 0 6px 0 8px; }
.account svg { width: 11px; height: 11px; }
.account button + button { margin-left: 11px; }
.account .user { flex: 1; }

.ribbon { display: flex; height: 55px; background: #f0f0f0; border-bottom: 1px solid #e2e2e2; font-family: Roboto, sans-serif; }
.design { width: 71px; margin: 6px 2px 6px 7px; border: 1px solid #d5d5d5; border-radius: 3px; background: #f3f3f3; font-size: 8px; font-weight: 700; gap: 4px; }
.ribbon-main { display: flex; flex-direction: column; }
.ribbon-tabs { display: flex; gap: 15px; padding-left: 8px; height: 14px; }
.ribbon-tabs a { padding: 2px 9px 0; color: #444; text-decoration: none; }
.ribbon-tabs .active { color: #0696d7; border-bottom: 2px solid #0696d7; }
.groups { display: flex; height: 40px; }
.group { padding: 3px 6px 0; border-right: 1px solid #dadada; display: flex; flex-direction: column; align-items: center; }
.group.single { padding: 3px 8px 0; }
.group:last-child { border-right: 0; }
.icons { display: flex; gap: 5px; height: 24px; }
.icons svg { width: 24px; height: 24px; }
.group-label { gap: 3px; height: 14px; }

.workspace { position: relative; flex: 1; display: flex; min-height: 0; }
.scene { position: absolute; inset: 0; width: 100%; height: 100%; }
.pointer { z-index: 3; pointer-events: none; }
.left-dock, .nav-area, .right-dock { position: relative; }
.left-dock { display: flex; flex-direction: column; width: 229px; padding: 2px 0 3px 2px; }
.dock-bar { display: flex; align-items: center; height: 17px; padding: 0 1px 0 3px; gap: 5px; background: #f1f1f1; border: 1px solid #d4d4d4; color: #555; }
.dot { margin-left: auto; }
.comments { padding-left: 16px; }
.grip { width: 3px; height: 10px; border: solid #aaa; border-width: 0 1px; }
.tree-wrap { flex: 1; display: flex; min-height: 0; padding: 2px 0 7px 3px; }
.tree-scroll { width: 4px; margin: 2px 0 2px; background: #ccc; padding-top: 147px; }
.tree-scroll i { display: block; height: 210px; background: #999; }
.tree { display: flex; flex-direction: column; flex: 1; }
.tree li { flex: 1; display: flex; align-items: center; padding-left: 42px; }
.tree .branch { padding-left: 16px; gap: 5px; }
.row { display: flex; align-items: center; height: 13px; padding: 0 8px 0 2px; background: #f2f2f2; }
.eye { width: 11px; height: 9px; }
.body { width: 12px; height: 12px; margin: 0 8px 0 5px; }
.branch .body { margin: 0 9px 0 6px; }
.expand { width: 8px; height: 10px; }

.nav-area { flex: 1; display: flex; align-items: flex-end; padding: 0 0 3px 78px; }
.navbar { display: flex; align-items: center; gap: 5px; height: 15px; padding: 0 6px 0 1px; background: #f3f3f3; }
.navbar svg { width: 12px; height: 12px; }
.navbar .menu { gap: 2px; }
.navbar .menu + .menu { margin-left: -2px; }
.navbar .menu.wide { margin-right: 8px; }

.right-dock { display: flex; flex-direction: column; width: 282px; margin-right: 3px; padding-bottom: 3px; }
.cube { width: 84px; height: 77px; margin-left: 201px; }
.cube-face { font: 700 7px "Liberation Sans", Arial, sans-serif; fill: #999; }
.cube-axis { font: 8px "Liberation Sans", Arial, sans-serif; }
.panel { flex: 1; display: flex; flex-direction: column; min-height: 0; background: #f0f0f0; border: 1px solid #d0d0d0; }
.panel-head { display: flex; align-items: center; height: 16px; gap: 2px; padding: 0 2px 0 0; border-bottom: 1px solid #ccc; color: #555; }
.push { margin-left: auto; }
.panel-body { flex: 1; display: flex; min-height: 0; }
.panel-content { flex: 1; display: flex; flex-direction: column; min-width: 0; overflow: hidden; }
.panel-scroll { width: 5px; margin: 0 1px 0 2px; background: #d2d2d2; }
.panel-scroll i { display: block; height: 70%; background: #949494; }
.panel h3 { display: flex; align-items: center; gap: 4px; height: 22px; padding-left: 5px; font-weight: 700; font-size: 8px; }
.panel h3.first { height: 20px; }
.panel h3.library { height: 24px; }
.field { display: flex; align-items: center; height: 20px; padding-left: 7px; }
.field span { width: 110px; }
input[type=radio] { appearance: none; width: 10px; height: 10px; margin: 0; border: 1px solid #444; border-radius: 50%; background: linear-gradient(#f8f8f8, #ccc); }
input[type=radio]:checked { background: radial-gradient(#000 0 2px, #eee 3px); }
hr { width: 100%; height: 2px; margin: 3px 0 1px; border: 0; background: #bbb; flex: none; }
.materials { height: 77px; margin: 0 0 0 4px; padding: 6px; background: #f9f9f9; flex: none; }
.swatch { width: 30px; height: 30px; }
.search { display: flex; align-items: center; height: 15px; margin-left: 5px; padding-right: 3px; border: 1px solid #777; background: #f8f8f8; flex: none; }
.search input { flex: 1; min-width: 0; border: 0; padding: 0 2px; background: none; font: inherit; outline: 0; }
.search input::placeholder { color: #555; font-style: italic; }
.search svg { width: 9px; height: 9px; }
.lib-tabs { display: flex; height: 18px; margin: 5px 0 0 5px; background: #dadada; border-bottom: 1px solid #c6c6c6; flex: none; }
.lib-tabs button { padding: 0 4px; }
.lib-tabs .on { background: #e3e3e3; border: solid #c6c6c6; border-width: 1px 1px 0; }
.lib-tabs .refresh { width: 18px; padding: 0; }
.refresh svg { width: 12px; height: 12px; }
.lib-tabs .mine { gap: 3px; padding: 0 5px 0 6px; }
.mine svg { width: 12px; height: 10px; }
.downloads { display: flex; align-items: center; height: 27px; padding: 0 12px 0 8px; flex: none; }
.downloads label { width: 111px; }
.downloads button { margin-left: auto; color: #bbb; }
input[type=checkbox] { appearance: none; width: 9px; height: 9px; margin: 0; border: 1px solid #444; border-radius: 1px; display: grid; place-items: center; background: #eee; }
input[type=checkbox]:checked::after { content: ""; width: 3px; height: 6px; border: solid #222; border-width: 0 1px 1px 0; rotate: 40deg; }
.lib-list { display: flex; flex: 1; min-height: 0; margin-left: 5px; overflow: hidden; }
.lib-list ul { flex: 1; }
.lib-list li { display: flex; align-items: center; height: 17px; gap: 3px; }
.lib-list svg { width: 11px; height: 9px; }
.list-scroll { width: 6px; background: #999; }
.panel-foot { display: flex; align-items: center; justify-content: space-between; height: 24px; padding: 0 7px 0 4px; border-top: 1px solid #ccc; }
.panel-foot svg { width: 9px; height: 9px; }
.panel-foot button { width: 40px; height: 13px; border: 1px solid #bbb; font-size: 9px; color: #666; }
.statusline { height: 2px; background: #ccc; }
```
